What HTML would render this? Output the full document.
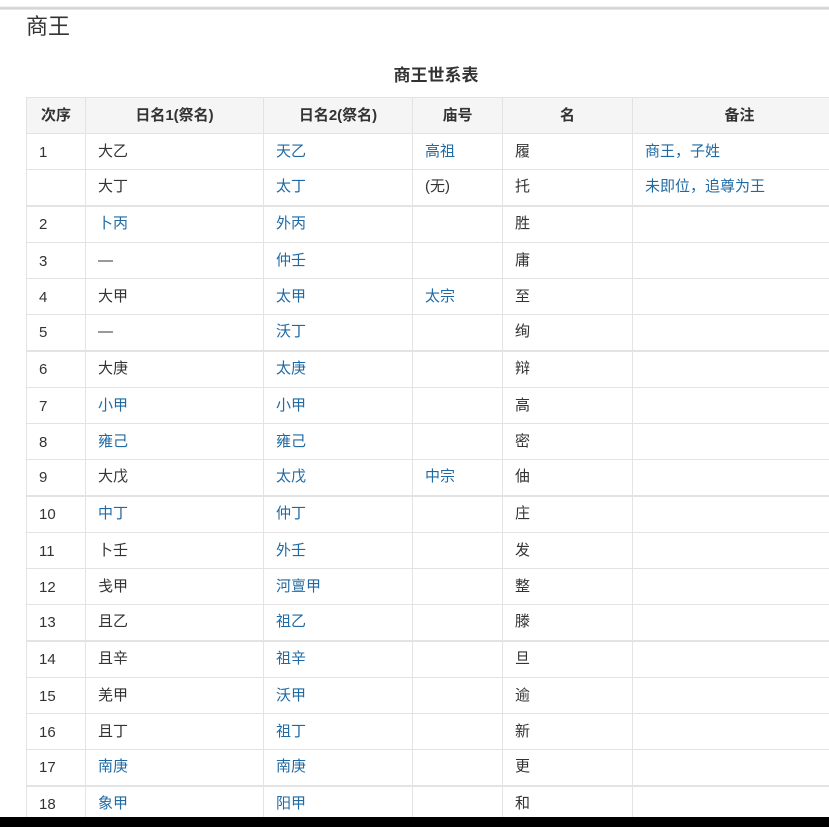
<!DOCTYPE html>
<html><head><meta charset="utf-8"><style>
html,body{margin:0;padding:0;width:829px;height:827px;overflow:hidden;background:#fff;position:relative}
body{font-family:"Liberation Sans","Noto Sans CJK SC",sans-serif;color:#333}
.top{position:absolute;left:0;top:0;width:829px;height:10px;background:linear-gradient(#fff 0,#fff 6px,#ccc 8px,#eee 10px)}
h1{position:absolute;left:26px;top:9px;margin:0;font-size:22px;font-weight:normal;color:#333}
.cap{position:absolute;left:26px;width:820px;top:61px;text-align:center;font-size:17px;font-weight:bold;color:#333}
table{position:absolute;left:26px;top:97px;border-collapse:collapse;table-layout:fixed;width:820px;font-size:15px}
td,th{border:1px solid #e3e3e3;height:36px;box-sizing:border-box;padding:0 0 0 12px;text-align:left;line-height:20px;vertical-align:middle}
td:first-child{padding-top:2px}
tr.g td{height:37px}
th{background:#f5f5f5;text-align:center;padding:0;font-weight:bold;font-size:15px}
tr.g td{border-top:2px solid #e3e3e3}
.b{color:#1f6aa5}
.bar{position:absolute;left:0;top:817px;width:829px;height:10px;background:#000}
</style></head><body>
<div class="top"></div>
<h1>商王</h1>
<div class="cap">商王世系表</div>
<table>
<colgroup><col style="width:59px"><col style="width:178px"><col style="width:149px"><col style="width:90px"><col style="width:130px"><col style="width:214px"></colgroup>
<tr><th>次序</th><th>日名1(祭名)</th><th>日名2(祭名)</th><th>庙号</th><th>名</th><th>备注</th></tr>
<tr><td>1</td><td>大乙</td><td class="b">天乙</td><td class="b">高祖</td><td>履</td><td class="b">商王，子姓</td></tr>
<tr><td></td><td>大丁</td><td class="b">太丁</td><td>(无)</td><td>托</td><td class="b">未即位，追尊为王</td></tr>
<tr class="g"><td>2</td><td class="b">卜丙</td><td class="b">外丙</td><td></td><td>胜</td><td></td></tr>
<tr><td>3</td><td>—</td><td class="b">仲壬</td><td></td><td>庸</td><td></td></tr>
<tr><td>4</td><td>大甲</td><td class="b">太甲</td><td class="b">太宗</td><td>至</td><td></td></tr>
<tr><td>5</td><td>—</td><td class="b">沃丁</td><td></td><td>绚</td><td></td></tr>
<tr class="g"><td>6</td><td>大庚</td><td class="b">太庚</td><td></td><td>辩</td><td></td></tr>
<tr><td>7</td><td class="b">小甲</td><td class="b">小甲</td><td></td><td>高</td><td></td></tr>
<tr><td>8</td><td class="b">雍己</td><td class="b">雍己</td><td></td><td>密</td><td></td></tr>
<tr><td>9</td><td>大戊</td><td class="b">太戊</td><td class="b">中宗</td><td>伷</td><td></td></tr>
<tr class="g"><td>10</td><td class="b">中丁</td><td class="b">仲丁</td><td></td><td>庄</td><td></td></tr>
<tr><td>11</td><td>卜壬</td><td class="b">外壬</td><td></td><td>发</td><td></td></tr>
<tr><td>12</td><td>戋甲</td><td class="b">河亶甲</td><td></td><td>整</td><td></td></tr>
<tr><td>13</td><td>且乙</td><td class="b">祖乙</td><td></td><td>滕</td><td></td></tr>
<tr class="g"><td>14</td><td>且辛</td><td class="b">祖辛</td><td></td><td>旦</td><td></td></tr>
<tr><td>15</td><td>羌甲</td><td class="b">沃甲</td><td></td><td>逾</td><td></td></tr>
<tr><td>16</td><td>且丁</td><td class="b">祖丁</td><td></td><td>新</td><td></td></tr>
<tr><td>17</td><td class="b">南庚</td><td class="b">南庚</td><td></td><td>更</td><td></td></tr>
<tr class="g"><td>18</td><td class="b">象甲</td><td class="b">阳甲</td><td></td><td>和</td><td></td></tr>
</table>
<div class="bar"></div>
</body></html>
